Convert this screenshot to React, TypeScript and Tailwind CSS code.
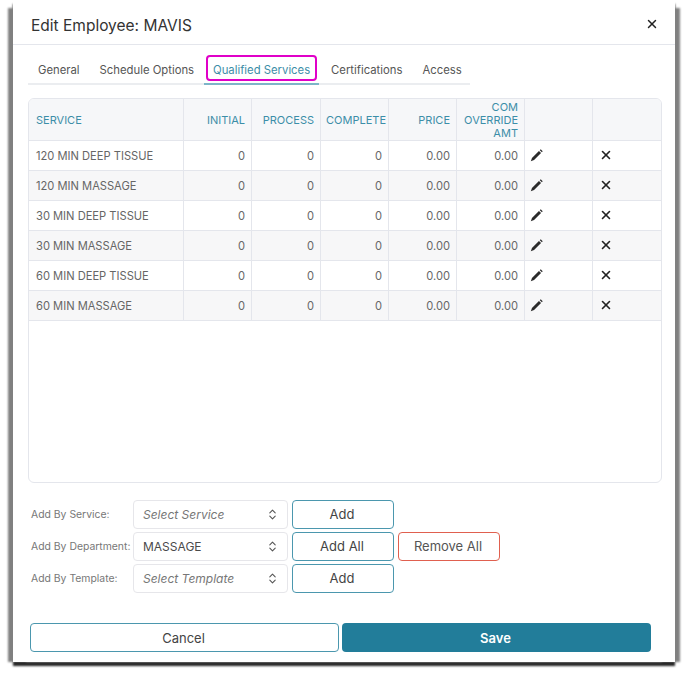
import { ChevronsUpDown, X } from "lucide-react";

const tabs = ["General", "Schedule Options", "Qualified Services", "Certifications", "Access"];

const services = [
  "120 MIN DEEP TISSUE",
  "120 MIN MASSAGE",
  "30 MIN DEEP TISSUE",
  "30 MIN MASSAGE",
  "60 MIN DEEP TISSUE",
  "60 MIN MASSAGE",
];

const headCell = "border-r border-b border-[#e4e6ec] px-[6px] pt-[2px] font-normal text-[#3c8ea8] text-[11px]";
const bodyCell = "border-r border-b border-[#e4e6ec] px-[6px] pt-[1px]";

function Pencil() {
  return (
    <svg viewBox="0 0 16 16" className="h-[13px] w-[13px] text-[#2b2b2b]" fill="currentColor">
      <path d="M1 15 2.4 11 11 2.4 13.6 5 5 13.6Z" />
      <path d="M12 1.4 13.2.4 15.6 2.8 14.6 4Z" />
    </svg>
  );
}

function SelectBox({ value, placeholder }: { value?: string; placeholder?: string }) {
  return (
    <div className="flex h-[29px] w-[155px] items-center justify-between rounded-[4px] border border-[#e6e6ea] pl-[9px] pr-[8px] text-[12px]">
      {value ? (
        <span className="pt-[1px] text-[#4a4a4a]">{value}</span>
      ) : (
        <span className="pt-[1px] italic text-[#777]">{placeholder}</span>
      )}
      <ChevronsUpDown size={13} className="text-[#555]" />
    </div>
  );
}

function OutlineButton({ label }: { label: string }) {
  return (
    <button className="h-[29px] w-[102px] rounded-[4px] border border-[#4b97ae] pr-[2px] text-[13px] text-[#444]">
      {label}
    </button>
  );
}

export default function App() {
  return (
    <div className="h-[688px] w-[688px] overflow-hidden bg-white pl-[13px] font-['Inter',sans-serif]">
      <div className="flex h-[662px] w-[662px] flex-col bg-white shadow-[-9px_4px_2px_-4px_#808080,9px_4px_2px_-4px_#808080,0_4px_2px_0_#222]">
        <div className="flex h-[45px] items-center justify-between border-b border-[#e4e6ec] pl-[18px] pr-[16px] pt-[4px]">
          <h1 className="pt-[3px] text-[15.5px] font-normal text-[#333]">Edit Employee: MAVIS</h1>
          <X size={14} strokeWidth={2.5} className="text-[#222]" />
        </div>

        <div className="ml-[15px] mt-[10px] flex h-[30px] w-[442px] items-stretch whitespace-nowrap border-b-2 border-[#ebedf0] text-[11.3px] text-[#555]">
          {tabs.map((tab) =>
            tab === "Qualified Services" ? (
              <div key={tab} className="-mb-[2px] mr-[2px] flex w-[115px] shrink-0 flex-col items-center border-b-2 border-[#7db5c8] px-[2px] pb-[2px]">
                <span className="flex h-[26px] w-full items-center justify-center rounded-[4px] border-2 border-[#e000c8] pt-[4px] text-[#3c8ea8]">
                  {tab}
                </span>
              </div>
            ) : (
              <span key={tab} className="flex shrink-0 items-center px-[10px] pt-[3px]">
                {tab}
              </span>
            )
          )}
        </div>

        <div className="ml-[15px] mt-[13px] h-[385px] w-[634px] overflow-hidden rounded-[6px] border border-[#e4e6ec]">
          <table className="w-full table-fixed border-separate border-spacing-0 text-[11.15px] text-[#666]">
            <colgroup>
              <col className="w-[155px]" />
              <col className="w-[68px]" />
              <col className="w-[69px]" />
              <col className="w-[68px]" />
              <col className="w-[68px]" />
              <col className="w-[68px]" />
              <col className="w-[68px]" />
              <col />
            </colgroup>
            <thead>
              <tr className="h-[42px] bg-[#f6f7f9] text-right leading-[13px]">
                <th className={`${headCell} !pl-[7px] !text-left`}>SERVICE</th>
                <th className={headCell}>INITIAL</th>
                <th className={headCell}>PROCESS</th>
                <th className={`${headCell} whitespace-nowrap !pl-[2px] !pr-[2px]`}>COMPLETE</th>
                <th className={headCell}>PRICE</th>
                <th className={headCell}>
                  COM
                  <br />
                  OVERRIDE
                  <br />
                  AMT
                </th>
                <th className={headCell}></th>
                <th className="border-b border-[#e4e6ec]"></th>
              </tr>
            </thead>
            <tbody>
              {services.map((service, i) => (
                <tr key={service} className={`h-[30px] text-right ${i % 2 === 1 ? "bg-[#f7f7f8]" : "bg-white"}`}>
                  <td className={`${bodyCell} !pl-[7px] !text-left`}>{service}</td>
                  <td className={bodyCell}>0</td>
                  <td className={bodyCell}>0</td>
                  <td className={bodyCell}>0</td>
                  <td className={bodyCell}>0.00</td>
                  <td className={bodyCell}>0.00</td>
                  <td className="border-r border-b border-[#e4e6ec] pl-[5px]">
                    <Pencil />
                  </td>
                  <td className="border-b border-[#e4e6ec] pl-[6px]">
                    <X size={14} strokeWidth={2.75} className="-mt-[1px] text-[#222]" />
                  </td>
                </tr>
              ))}
            </tbody>
          </table>
        </div>

        <div className="ml-[18px] mt-[17px] flex flex-col gap-[3px] text-[10.4px] text-[#777]">
          <div className="flex items-center gap-[4px]">
            <span className="w-[98px]">Add By Service:</span>
            <SelectBox placeholder="Select Service" />
            <OutlineButton label="Add" />
          </div>
          <div className="flex items-center gap-[4px]">
            <span className="w-[98px] whitespace-nowrap">Add By Department:</span>
            <SelectBox value="MASSAGE" />
            <OutlineButton label="Add All" />
            <button className="h-[29px] w-[102px] rounded-[4px] border border-[#e0604f] pr-[2px] text-[13px] text-[#555]">
              Remove All
            </button>
          </div>
          <div className="flex items-center gap-[4px]">
            <span className="w-[98px]">Add By Template:</span>
            <SelectBox placeholder="Select Template" />
            <OutlineButton label="Add" />
          </div>
        </div>

        <div className="ml-[17px] mt-[30px] flex gap-[3px] text-[13px]">
          <button className="h-[29px] w-[309px] rounded-[4px] border border-[#4b97ae] pr-[2px] pt-[2px] text-[#444]">Cancel</button>
          <button className="h-[29px] w-[309px] rounded-[4px] bg-[#227d9a] pr-[2px] pt-[2px] font-semibold text-white">Save</button>
        </div>
      </div>
    </div>
  );
}
